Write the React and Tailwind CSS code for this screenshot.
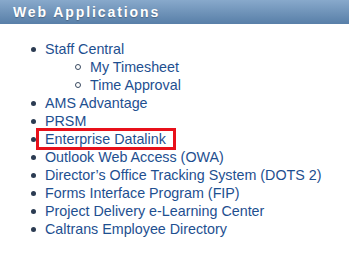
import React from 'react';

const items = [
  { label: 'Staff Central', sub: ['My Timesheet', 'Time Approval'] },
  { label: 'AMS Advantage' },
  { label: 'PRSM' },
  { label: 'Enterprise Datalink', highlight: true },
  { label: 'Outlook Web Access (OWA)' },
  { label: 'Director\u2019s Office Tracking System (DOTS 2)' },
  { label: 'Forms Interface Program (FIP)' },
  { label: 'Project Delivery e-Learning Center' },
  { label: 'Caltrans Employee Directory' },
];

const Row = ({ children, sub }) => (
  <li className="flex items-center h-[18px]">
    {sub ? (
      <span className="w-[6px] h-[6px] rounded-full border border-[#3a4a60] ml-[75px] mr-[9px]" />
    ) : (
      <span className="w-[5px] h-[5px] rounded-full bg-[#2b3b52] ml-[31px] mr-[9px]" />
    )}
    {children}
  </li>
);

export default function App() {
  return (
    <div className="w-[349px] h-[255px] bg-white overflow-hidden" style={{ fontFamily: '"Liberation Sans", Arial, sans-serif' }}>
      <div className="h-[24px] bg-gradient-to-b from-[#88a9cb] to-[#587fa8] flex items-center pl-[13px]">
        <span className="text-white font-bold text-[14px] tracking-[1.9px] [text-shadow:0_1px_1px_rgba(0,0,0,0.25)]">
          Web Applications
        </span>
      </div>
      <ul className="pt-[16px]">
        {items.map((it) => (
          <React.Fragment key={it.label}>
            <Row>
              {it.highlight ? (
                <span className="border-[3px] border-[#e8101a] px-[6px] -ml-[9px] h-[22px] leading-[16px] text-[14.3px] text-[#1e4f90] w-[140px] whitespace-nowrap">
                  {it.label}
                </span>
              ) : (
                <span className="text-[14.3px] text-[#1e4f90] leading-[18px] whitespace-nowrap">{it.label}</span>
              )}
            </Row>
            {it.sub &&
              it.sub.map((s) => (
                <Row key={s} sub>
                  <span className="text-[14.3px] text-[#1e4f90] leading-[18px] whitespace-nowrap">{s}</span>
                </Row>
              ))}
          </React.Fragment>
        ))}
      </ul>
    </div>
  );
}
